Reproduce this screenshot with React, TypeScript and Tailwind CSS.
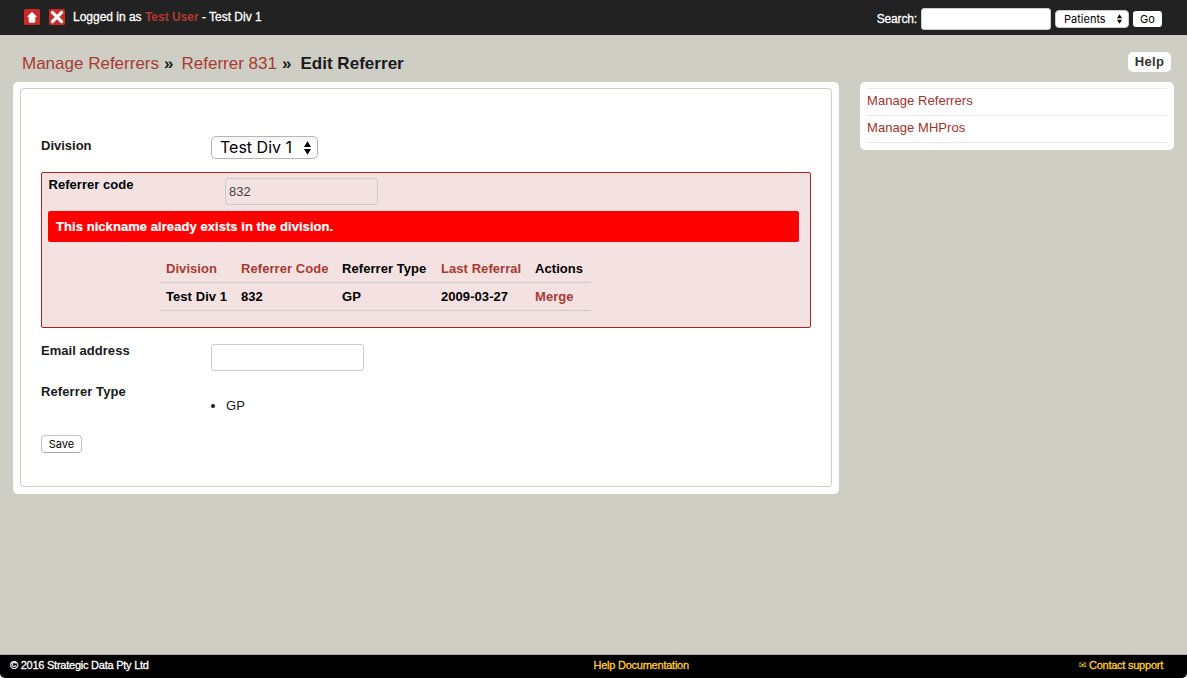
import type { ReactNode } from "react";

function UpDown({ className }: { className: string }) {
  return (
    <svg className={className} viewBox="0 0 7 14" fill="#000">
      <path d="M3.5 0.2 7 6H0z M3.5 13.8 0 8h7z" />
    </svg>
  );
}

function HomeIcon() {
  return (
    <svg className="h-4 w-4" viewBox="0 0 16 16">
      <rect width="16" height="16" rx="1.5" fill="#cb2a27" />
      <path d="M8 3.2 12.4 7.6H10.9V13.2H5.1V7.6H3.6z" fill="#fff" stroke="#fff" strokeWidth="0.8" strokeLinejoin="round" />
    </svg>
  );
}

function CloseIcon() {
  return (
    <svg className="h-4 w-4" viewBox="0 0 16 16">
      <rect width="16" height="16" rx="1.5" fill="#cb2a27" />
      <path d="M3.4 3.4l9.2 9.2M12.6 3.4l-9.2 9.2" stroke="#fff" strokeWidth="3.2" strokeLinecap="round" />
    </svg>
  );
}

function SideLink({ children }: { children: ReactNode }) {
  return (
    <li className="h-[27px] border-b border-[#e8e8e8] leading-[23px]">
      <a className="tracking-[0.06px] text-[#a5332a]">{children}</a>
    </li>
  );
}

function Header() {
  return (
    <header className="flex h-[35px] items-center bg-[#222] text-[11px] text-white [-webkit-text-stroke:0.3px]">
      <div className="flex h-[35px] gap-[9px] pt-[9px] pl-6">
        <HomeIcon />
        <CloseIcon />
      </div>
      <p className="ml-2 pb-px text-[12px] tracking-[-0.01px]">
        Logged in as <b className="text-[#b03a30] [-webkit-text-stroke:0]">Test User</b> - Test Div 1
      </p>
      <div className="mr-[25px] ml-auto flex items-center pt-[3px]">
        <label className="mr-1 text-[12px] tracking-[-0.15px]">Search:</label>
        <input className="h-[22px] w-[130px] rounded-[3px] border border-[#ccc] bg-white" />
        <button className="ml-1 flex h-[18px] w-[74px] items-center justify-between rounded-[4px] border border-[#ccc] bg-white pr-[6px] pl-2 font-[Inter] text-[11px] text-black [-webkit-text-stroke:0]">
          Patients
          <UpDown className="h-[10px] w-[5px]" />
        </button>
        <button className="ml-1 h-4 w-[29px] rounded-[3px] bg-white font-[Inter] text-[11px] leading-4 text-black [-webkit-text-stroke:0]">
          Go
        </button>
      </div>
    </header>
  );
}

function Duplicates() {
  const link = "text-[#a93a31]";
  return (
    <table className="mt-[12px] ml-[112px] w-[431px] table-fixed border-collapse text-left font-bold tracking-[0.06px] text-black">
      <colgroup>
        <col className="w-[75px]" />
        <col className="w-[101px]" />
        <col className="w-[99px]" />
        <col className="w-[94px]" />
        <col className="w-[62px]" />
      </colgroup>
      <tbody>
        <tr className="h-7 border-b border-[#ccc] whitespace-nowrap">
          <th className={`pt-0.5 pl-[6px] ${link}`}>Division</th>
          <th className={`pt-0.5 pl-[6px] ${link}`}>Referrer Code</th>
          <th className="pt-0.5 pl-[6px]">Referrer Type</th>
          <th className={`pt-0.5 pl-[6px] ${link}`}>Last Referral</th>
          <th className="pt-0.5 pl-[6px]">Actions</th>
        </tr>
        <tr className="h-7 border-b border-[#ccc] whitespace-nowrap">
          <td className="pt-0.5 pl-[6px]">Test Div 1</td>
          <td className="pt-0.5 pl-[6px]">832</td>
          <td className="pt-0.5 pl-[6px]">GP</td>
          <td className="pt-0.5 pl-[6px]">2009-03-27</td>
          <td className={`pt-0.5 pl-[6px] ${link}`}>Merge</td>
        </tr>
      </tbody>
    </table>
  );
}

function EditForm() {
  return (
    <section className="h-[412px] w-[826px] rounded-[5px] bg-white px-[7px] pt-[6px] pb-[7px]">
      <form className="h-[399px] rounded-[4px] border border-[#cecec5] px-5 pt-[47px]">
        <div className="flex h-9">
          <label className="w-[170px] pt-[2px] font-bold leading-4">Division</label>
          <button
            type="button"
            className="flex h-[23px] w-[107px] items-center justify-between rounded-[5px] border border-[#b5b5b5] bg-linear-to-b from-[#f4f4f4] to-white to-30% pr-[6px] pl-2 font-[Inter] text-[16px] text-black"
          >
            <span className="pb-0.5">Test Div 1</span>
            <UpDown className="h-[14px] w-[7px]" />
          </button>
        </div>
        <div className="h-[156px] w-[770px] rounded-[2px] border border-[#b22222] bg-[#f4e2e2] pl-[6px]">
          <div className="flex h-[38px] pt-[5px]">
            <label className="w-[177px] pl-[0.5px] font-bold leading-[14px] tracking-[0.04px] text-black">Referrer code</label>
            <input
              disabled
              defaultValue="832"
              className="h-[27px] w-[153px] rounded-[3px] border border-[#ccc] px-[3px] text-[#444]"
            />
          </div>
          <p className="h-[31px] w-[751px] rounded-[2px] bg-[#f00] pl-2 font-bold leading-[31px] tracking-[0.06px] text-white [-webkit-text-stroke:0.2px]">
            This nickname already exists in the division.
          </p>
          <Duplicates />
        </div>
        <div className="mt-4 flex h-[41px]">
          <label className="w-[170px] font-bold leading-[14px] tracking-[0.04px]">Email address</label>
          <input className="h-[27px] w-[153px] rounded-[3px] border border-[#ccc] bg-white" />
        </div>
        <div className="flex h-[50px]">
          <label className="w-[170px] font-bold leading-[14px] tracking-[0.1px]">Referrer Type</label>
          <ul className="mt-[14px] flex h-[14px] items-center leading-[14px]">
            <li className="mr-[11px] h-1 w-1 rounded-full bg-[#1a1a1a]" />
            <li className="tracking-[0.2px]">GP</li>
          </ul>
        </div>
        <button
          type="button"
          className="block h-[18px] w-[41px] rounded-[4px] border border-[#c4c4c4] border-b-[#aaa] bg-white font-[Inter] text-[11px] leading-4 text-black"
        >
          Save
        </button>
      </form>
    </section>
  );
}

export default function App() {
  return (
    <div className="h-[678px] w-[1187px] bg-white">
      <div className="flex h-[678px] flex-col overflow-hidden rounded-b-[5px] bg-[#cecec5] font-['Liberation_Sans',Arial,sans-serif] text-[13px] text-[#1a1a1a]">
        <Header />
        <div className="flex h-[47px] items-center justify-between pt-[8px] pr-4 pl-[22px]">
          <h1 className="flex items-center pt-0.5 text-[17px]">
            <a className="text-[#a93a31]">Manage Referrers</a>
            <b className="mr-2 ml-[5px]">»</b>
            <a className="text-[#a93a31]">Referrer 831</a>
            <b className="mr-[9px] ml-[5px]">»</b>
            <b className="tracking-[0.03px]">Edit Referrer</b>
          </h1>
          <button className="mb-[2px] h-5 w-[43px] rounded-[5px] bg-white text-[13px] font-bold leading-5 tracking-[0.3px] text-[#333]">
            Help
          </button>
        </div>
        <main className="flex flex-1 items-start gap-[21px] pl-[13px]">
          <EditForm />
          <nav className="h-[68px] w-[314px] rounded-[5px] bg-white px-[7px] pt-[6px]">
            <ul className="border-t border-[#e8e8e8]">
              <SideLink>Manage Referrers</SideLink>
              <SideLink>Manage MHPros</SideLink>
            </ul>
          </nav>
        </main>
        <footer className="flex h-6 justify-between border-t border-[#aaaaa4] bg-black pr-6 pl-[10px] text-[11px] leading-[21px] tracking-[-0.24px] text-white [-webkit-text-stroke:0.3px]">
          <span className="w-[583.5px]">© 2016 Strategic Data Pty Ltd</span>
          <a className="flex-1 text-[#fc3]">Help Documentation</a>
          <a className="flex gap-[3px] text-[#fc3]">
            <span className="font-['DejaVu_Sans'] text-[9px] [-webkit-text-stroke:0]">✉</span>
            Contact support
          </a>
        </footer>
      </div>
    </div>
  );
}
